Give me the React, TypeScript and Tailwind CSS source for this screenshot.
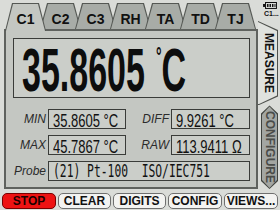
import React from 'react';

function Tab({ label, active, first }: { label: string; active?: boolean; first?: boolean }) {
  return (
    <div
      className={`${first ? '' : '-ml-[6px]'} ${active ? 'relative z-10 h-[28px]' : 'h-[26px]'} w-[41px] shrink-0 bg-[#555854] px-[1px] pt-[1px] [clip-path:polygon(7px_0,34px_0,41px_100%,0_100%)]`}
    >
      <div
        className={`${active ? 'bg-[#c4c7c2] pb-[2px]' : 'bg-[#a8aca7]'} flex h-full w-full items-center justify-center pt-[4px] text-[14px] font-bold leading-[16px] text-[#111] [clip-path:polygon(7px_0,32px_0,39px_100%,0_100%)]`}
      >
        {label}
      </div>
    </div>
  );
}

function ValueBox({ w, children }: { w: string; children: React.ReactNode }) {
  return (
    <div className={`${w} h-[20px] border border-[#3a3c39] bg-[#cbcec9] pl-[4px] pt-[3px]`}>
      <div className="origin-top scale-y-[1.385] whitespace-nowrap text-[13px] leading-[11.5px] text-[#111]">{children}</div>
    </div>
  );
}

function Label({ w, children }: { w: string; children: React.ReactNode }) {
  return <div className={`${w} pr-[2px] text-right text-[12px] italic leading-[14px] text-[#2b2b2b]`}>{children}</div>;
}

function Btn({ children, red, w }: { children: React.ReactNode; red?: boolean; w: string }) {
  return (
    <div
      className={`${w} ${red ? 'border-[#7a0000] bg-[#ee1313] text-[#1e0000]' : 'border-[#6f6f6f] bg-[#f3f3f1] text-[#111]'} flex h-[16px] items-center justify-center rounded-[5px] border text-[12px] font-bold leading-none`}
    >
      {children}
    </div>
  );
}

export default function App() {
  return (
    <div className="flex h-[210px] w-[280px] flex-col overflow-hidden bg-[#dadcd8] font-['Liberation_Sans',Arial,sans-serif]">
      <div className="flex h-[189px]">
        {/* left column */}
        <div className="flex w-[258px] flex-col">
          <div className="flex h-[29px] items-start pl-[5px] pt-[3px]">
            <Tab label="C1" active first />
            <Tab label="C2" />
            <Tab label="C3" />
            <Tab label="RH" />
            <Tab label="TA" />
            <Tab label="TD" />
            <Tab label="TJ" />
          </div>
          <div className="ml-[4px] flex h-[160px] w-[254px] flex-col border-2 border-[#5f625e] bg-[#c4c7c2] pt-[7px]">
            <div className="ml-[7px] h-[60px] w-[237px] border border-[#3a3c39] bg-[#cbcec9] pl-[8px]">
              <div className="-mt-[1px] flex origin-top scale-y-[1.82] items-start whitespace-nowrap text-[34px] font-bold leading-[34px] text-[#0d0d0d]">
                <span>35.8605</span>
                <span className="ml-[11px] mt-[2.5px] text-[14px] leading-[14px]">°</span>
                <span>C</span>
              </div>
            </div>
            <div className="mt-[11px] flex h-[20px] items-center">
              <Label w="ml-[7px] w-[35px]">MIN</Label>
              <ValueBox w="w-[78px]">35.8605 °C</ValueBox>
              <Label w="w-[45px]">DIFF</Label>
              <ValueBox w="w-[79px]">9.9261 °C</ValueBox>
            </div>
            <div className="mt-[6px] flex h-[20px] items-center">
              <Label w="ml-[7px] w-[35px]">MAX</Label>
              <ValueBox w="w-[78px]">45.7867 °C</ValueBox>
              <Label w="w-[45px]">RAW</Label>
              <ValueBox w="w-[79px]">113.9411 Ω</ValueBox>
            </div>
            <div className="mt-[6px] flex h-[20px] items-center">
              <Label w="ml-[7px] w-[35px]">Probe</Label>
              <div className="h-[20px] w-[202px] border border-[#3a3c39] bg-[#cbcec9] pl-[4px] pt-[1px]">
                <div className="origin-top scale-y-[1.587] whitespace-pre font-['DejaVu_Sans_Mono',monospace] text-[11.34px] leading-[10px] text-[#111]">
                  (21) Pt-100  ISO/IEC751
                </div>
              </div>
            </div>
          </div>
        </div>
        {/* right column */}
        <div className="flex w-[22px] flex-col">
          <svg className="ml-[5px] mt-[2px]" width="14" height="7" viewBox="0 0 14 7">
            <rect x="0" y="2" width="2" height="3" fill="#111" />
            <rect x="2.5" y="0.5" width="11" height="6" fill="none" stroke="#111" />
            <rect x="4" y="2" width="1.5" height="3" fill="#111" />
            <rect x="6.5" y="2" width="1.5" height="3" fill="#111" />
            <rect x="9" y="2" width="1.5" height="3" fill="#111" />
            <rect x="11.5" y="2" width="1" height="3" fill="#111" />
          </svg>
          <div className="ml-[6px] mt-[1px] text-[7px] font-bold leading-[7px] text-[#111]">C1...</div>
          <div className="mt-[4px] h-[85px] w-[20px] bg-[#4d504c] py-[1px] pr-[1px] [clip-path:polygon(0_0,100%_9px,100%_calc(100%_-_9px),0_100%)]">
            <div className="flex h-full w-full items-center justify-center bg-[#e0e2de] pl-[2px] [clip-path:polygon(0_0,100%_9px,100%_calc(100%_-_9px),0_100%)]">
              <span className="text-[12px] font-bold leading-[14px] text-[#111] [writing-mode:vertical-rl]">MEASURE</span>
            </div>
          </div>
          <div className="ml-[3px] h-[84px] w-[17px] bg-[#3f423e] p-[1px] [clip-path:polygon(0_8px,50%_0,100%_8px,100%_calc(100%_-_8px),50%_100%,0_calc(100%_-_8px))]">
            <div className="flex h-full w-full items-center justify-center bg-[#a3a6a2] [clip-path:polygon(0_8px,50%_0,100%_8px,100%_calc(100%_-_8px),50%_100%,0_calc(100%_-_8px))]">
              <span className="text-[12px] font-bold leading-[14px] text-[#4a4c49] [writing-mode:vertical-rl]">CONFIGURE</span>
            </div>
          </div>
        </div>
      </div>
      <div className="mt-[4px] flex gap-[2px] pl-[2px]">
        <Btn red w="w-[54px]">STOP</Btn>
        <Btn w="w-[53px]">CLEAR</Btn>
        <Btn w="w-[53px]">DIGITS</Btn>
        <Btn w="w-[54px]">CONFIG</Btn>
        <Btn w="w-[54px]">VIEWS...</Btn>
      </div>
    </div>
  );
}
